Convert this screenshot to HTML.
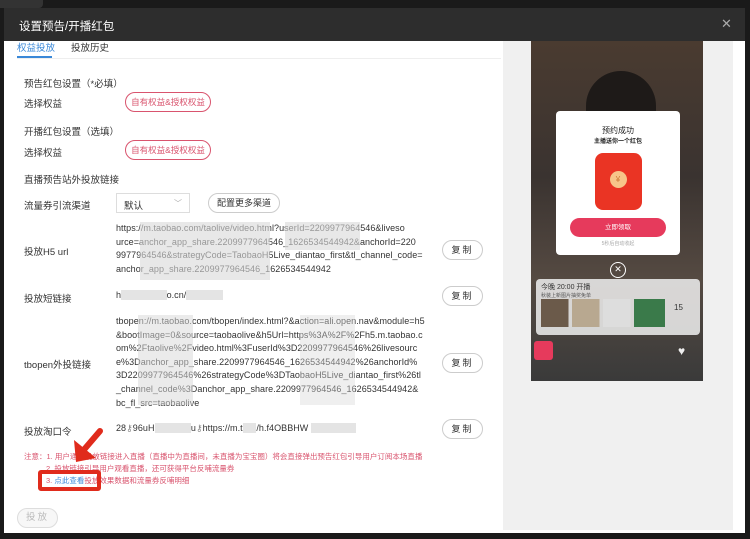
<!DOCTYPE html><html><head><meta charset="utf-8"><style>
*{margin:0;padding:0;box-sizing:border-box}
body{width:750px;height:539px;background:#1a1a1a;font-family:"Liberation Sans","Noto Sans CJK SC",sans-serif;position:relative;overflow:hidden;font-size:9.5px;color:#333}
.a{position:absolute}
.hdr{left:4px;top:8px;width:741px;height:33px;background:#2d2d2d;color:#fff;font-size:11.5px;padding:10px 15px}
.main{left:4px;top:41px;width:741px;height:492px;background:#fff}
.rp{left:503px;top:41px;width:230px;height:489px;background:#f0f0f0}
.pill{border:1px solid #d9546e;color:#d9546e;border-radius:10px;width:86px;height:20px;text-align:center;line-height:18px;font-size:8.5px}
.btn{border:1px solid #ccc;border-radius:10px;width:41px;height:20px;text-align:center;line-height:18px;font-size:9px;color:#333;letter-spacing:2px}
.u{font-size:9px;line-height:13.6px;color:#333;white-space:nowrap;letter-spacing:0.05px}
.bl{background:#d8d8d8;opacity:.8}
</style></head><body>
<div class="a" style="left:0;top:0;width:43px;height:8px;background:#333;border-radius:0 0 4px 0"></div>
<div class="a hdr">设置预告/开播红包</div>
<div class="a" style="left:721px;top:16px;color:#aaa;font-size:13px">✕</div>
<div class="a main"></div>
<div class="a rp"></div>
<div class="a" style="left:17px;top:40px;color:#3a88d8;font-size:9.5px">权益投放</div>
<div class="a" style="left:17px;top:56px;width:35px;height:2px;background:#3a88d8"></div>
<div class="a" style="left:71px;top:40px;font-size:9.5px">投放历史</div>
<div class="a" style="left:17px;top:58px;width:484px;height:1px;background:#eee"></div>
<div class="a" style="left:24px;top:76px">预告红包设置（*必填）</div>
<div class="a" style="left:24px;top:96px">选择权益</div>
<div class="a pill" style="left:125px;top:92px">自有权益&amp;授权权益</div>
<div class="a" style="left:24px;top:124px">开播红包设置（选填）</div>
<div class="a" style="left:24px;top:145px">选择权益</div>
<div class="a pill" style="left:125px;top:140px">自有权益&amp;授权权益</div>
<div class="a" style="left:24px;top:172px">直播预告站外投放链接</div>
<div class="a" style="left:24px;top:198px">流量券引流渠道</div>
<div class="a" style="left:116px;top:193px;width:74px;height:20px;border:1px solid #ddd;padding:4px 7px">默认<span style="float:right;color:#aaa;font-size:8px">﹀</span></div>
<div class="a btn" style="left:208px;top:193px;width:72px;letter-spacing:0">配置更多渠道</div>
<div class="a" style="left:24px;top:244px">投放H5 url</div>
<div class="a u" style="left:116px;top:222px">https://m.taobao.com/taolive/video.html?userId=2209977964546&amp;liveso<br>urce=anchor_app_share.2209977964546_1626534544942&amp;anchorId=220<br>9977964546&amp;strategyCode=TaobaoH5Live_diantao_first&amp;tl_channel_code=<br>anchor_app_share.2209977964546_1626534544942</div>
<div class="a bl" style="left:140px;top:222px;width:130px;height:58px;opacity:.6"></div>
<div class="a bl" style="left:285px;top:222px;width:75px;height:28px;opacity:.6"></div>
<div class="a btn" style="left:442px;top:240px">复制</div>
<div class="a" style="left:24px;top:291px">投放短链接</div>
<div class="a u" style="left:116px;top:289px">h<span style="background:#e4e4e4;color:transparent">xxxxxxxxxx</span>o.cn/<span style="background:#e4e4e4;color:transparent">xxxxxxxx</span></div>
<div class="a btn" style="left:442px;top:286px">复制</div>
<div class="a" style="left:24px;top:357px">tbopen外投链接</div>
<div class="a u" style="left:116px;top:315px">tbopen://m.taobao.com/tbopen/index.html?&amp;action=ali.open.nav&amp;module=h5<br>&amp;bootImage=0&amp;source=taobaolive&amp;h5Url=https%3A%2F%2Fh5.m.taobao.c<br>om%2Ftaolive%2Fvideo.html%3FuserId%3D2209977964546%26livesourc<br>e%3Danchor_app_share.2209977964546_1626534544942%26anchorId%<br>3D2209977964546%26strategyCode%3DTaobaoH5Live_diantao_first%26tl<br>_channel_code%3Danchor_app_share.2209977964546_1626534544942&amp;<br>bc_fl_src=taobaolive</div>
<div class="a bl" style="left:138px;top:315px;width:55px;height:90px;opacity:.5"></div>
<div class="a bl" style="left:300px;top:315px;width:55px;height:90px;opacity:.4"></div>
<div class="a btn" style="left:442px;top:353px">复制</div>
<div class="a" style="left:24px;top:424px">投放淘口令</div>
<div class="a u" style="left:116px;top:422px">28<span style="color:#888">⚷</span>96uH<span style="background:#e4e4e4;color:transparent">xxxxxxxx</span>u<span style="color:#888">⚷</span>https://m.t<span style="background:#e4e4e4;color:transparent">xxx</span>/h.f4OBBHW <span style="background:#e4e4e4;color:transparent">xxxxxxxxxx</span></div>
<div class="a btn" style="left:442px;top:419px">复制</div>
<div class="a" style="left:24px;top:451px;color:#d9546e;font-size:7.5px;line-height:12px;white-space:nowrap">注意：1. 用户通过投放链接进入直播（直播中为直播间，未直播为宝宝圈）将会直接弹出预告红包引导用户订阅本场直播<br><span style="padding-left:22px">2. 投放链接引导用户观看直播，还可获得平台反哺流量券</span><br><span style="padding-left:22px">3. <span style="color:#3a88d8">点此查看</span>投放效果数据和流量券反哺明细</span></div>
<div class="a" style="left:38px;top:470px;width:63px;height:21px;border:4px solid #e02b1c;border-radius:3px"></div>
<svg class="a" style="left:68px;top:428px" width="36" height="40"><path d="M32 3 L14 24" stroke="#e02b1c" stroke-width="6" stroke-linecap="round"/><path d="M6 12 L8 34 L28 30 Z" fill="#e02b1c"/></svg>
<div class="a" style="left:17px;top:508px;width:41px;height:20px;border:1px solid #ddd;border-radius:10px;color:#bbb;text-align:center;line-height:18px;letter-spacing:2px;background:#f7f7f7">投放</div>
<div class="a" style="left:531px;top:41px;width:172px;height:340px;background:linear-gradient(180deg,#4a3b30,#3a3330 40%,#554a42 70%,#3a3a3a);overflow:hidden">
<div class="a" style="left:55px;top:30px;width:70px;height:90px;border-radius:35px;background:#1e1a18"></div>
<div class="a" style="left:25px;top:70px;width:124px;height:144px;background:#fff;border-radius:4px">
<div style="text-align:center;margin-top:14px;font-size:8px;color:#222">预约成功</div>
<div style="text-align:center;font-size:6px;color:#222;font-weight:bold">主播送你一个红包</div>
<div style="margin:8px auto 0;width:47px;height:57px;background:#ea3424;border-radius:8px;position:relative"><div style="position:absolute;left:15px;top:18px;width:17px;height:17px;border-radius:50%;background:#f7c589;color:#c73;font-size:8px;text-align:center;line-height:17px">¥</div></div>
<div style="margin:8px auto 0;width:96px;height:19px;border-radius:10px;background:#e63a5c;color:#fff;font-size:6.5px;text-align:center;line-height:19px">立即领取</div>
<div style="text-align:center;font-size:5px;color:#aaa;margin-top:3px">5秒后自动收起</div></div>
<div class="a" style="left:79px;top:221px;width:16px;height:16px;border:1.5px solid #fff;border-radius:50%;color:#fff;font-size:9px;text-align:center;line-height:13px">✕</div>
<div class="a" style="left:5px;top:238px;width:164px;height:56px;background:rgba(240,240,240,.85);border-radius:4px;font-size:7px;padding:3px 5px">今晚 20:00 开播<br><span style="font-size:5px;color:#555">秋装上新图片抽奖免单</span>
<div style="position:absolute;left:5px;top:20px;width:124px;height:28px;background:linear-gradient(90deg,#6b5a4a 0 22%,#fff0 22% 25%,#b8a890 25% 47%,#fff0 47% 50%,#ddd 50% 72%,#fff0 72% 75%,#3a7a4a 75%)"></div>
<div style="position:absolute;left:138px;top:24px;font-size:8px;text-align:center">15</div></div>
<div class="a" style="left:3px;top:300px;width:19px;height:19px;background:#e63a5c;border-radius:3px"></div>
<div class="a" style="left:147px;top:303px;color:#eee;font-size:12px">♥</div>
</div>
</body></html>
